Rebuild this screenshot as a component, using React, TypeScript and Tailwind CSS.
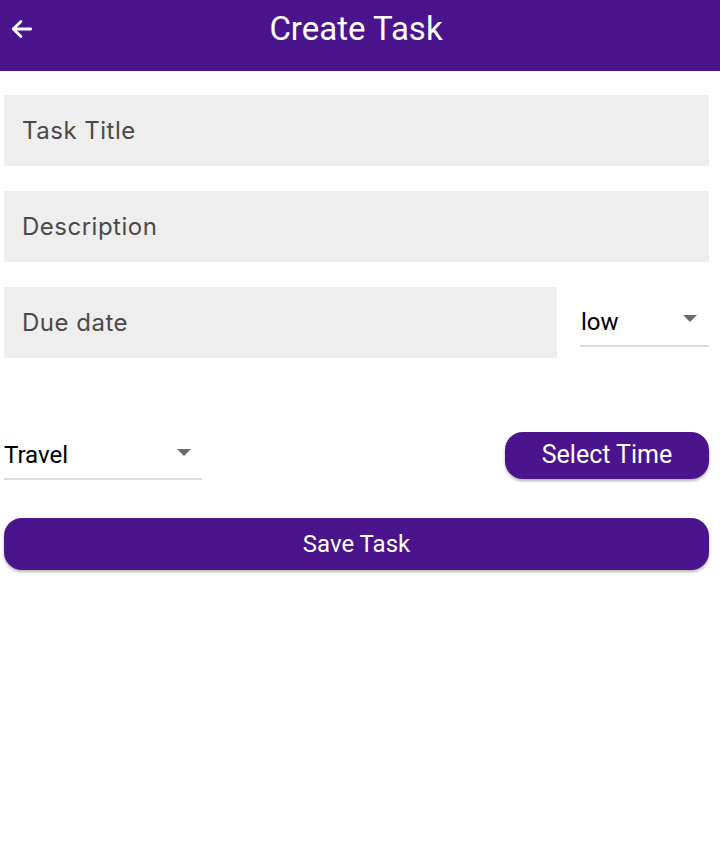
import React, { useState } from 'react';

const PURPLE = 'bg-[#4a148c]';

const Caret = () => (
  <svg width="14" height="8" viewBox="0 0 14 8" className="shrink-0">
    <path d="M0 0 L14 0 L7 7 Z" fill="#6b6b6b" />
  </svg>
);

const CreateTask: React.FC = () => {
  const [title, setTitle] = useState('');
  const [desc, setDesc] = useState('');
  const [due, setDue] = useState('');

  const field =
    'w-full h-[71px] bg-[#eeeeee] px-[18px] text-[24px] text-[#4a4a4a] placeholder:text-[#4a4a4a] outline-none tracking-[0.5px]';

  return (
    <div className="min-h-screen bg-white font-['Roboto',sans-serif]">
      {/* header */}
      <header className={`${PURPLE} h-[71px] relative flex items-start justify-center`}>
        <button className="absolute left-[9px] top-[16px] text-white">
          <svg width="26" height="26" viewBox="0 0 24 24" fill="none" stroke="white" strokeWidth="2.6" strokeLinecap="round" strokeLinejoin="round">
            <path d="M20 12H4" />
            <path d="M11 5l-7 7 7 7" />
          </svg>
        </button>
        <h1 className="text-white text-[33px] leading-none mt-[12px] pr-[8px] tracking-[0px]">Create Task</h1>
      </header>

      <div className="pl-[4px] pr-[11px] pt-[24px] flex flex-col">
        <input
          className={`${field} font-['Inter',sans-serif]`}
          placeholder="Task Title"
          value={title}
          onChange={(e) => setTitle(e.target.value)}
        />
        <input
          className={`${field} mt-[25px] font-['Inter',sans-serif]`}
          placeholder="Description"
          value={desc}
          onChange={(e) => setDesc(e.target.value)}
        />
        <div className="mt-[25px] flex items-start gap-[23px]">
          <input
            className={`${field} flex-1 font-['Inter',sans-serif]`}
            placeholder="Due date"
            value={due}
            onChange={(e) => setDue(e.target.value)}
          />
          <div className="w-[129px] h-[60px] border-b-2 border-[#dcdcdc] flex items-end justify-between pb-[11px] pl-[1px] pr-[12px]">
            <span className="text-[24px] leading-none text-black">low</span>
            <span className="mb-[11px]"><Caret /></span>
          </div>
        </div>

        <div className="mt-[73px] flex items-center justify-between">
          <div className="w-[198px] h-[48px] border-b-2 border-[#dcdcdc] flex items-end justify-between pb-[11px] pr-[11px] mt-[1px]">
            <span className="text-[24px] leading-none text-black">Travel</span>
            <span className="mb-[10px]"><Caret /></span>
          </div>
          <button className={`${PURPLE} w-[204px] h-[47px] rounded-[18px] text-white text-[25px] leading-none pb-[2px] shadow-[0_2px_3px_rgba(0,0,0,0.3)]`}>
            Select Time
          </button>
        </div>

        <button className={`${PURPLE} mt-[38px] w-full h-[52px] rounded-[18px] text-white text-[24px] shadow-[0_2px_3px_rgba(0,0,0,0.3)]`}>
          Save Task
        </button>
      </div>
    </div>
  );
};

export default function App() {
  return <CreateTask />;
}
